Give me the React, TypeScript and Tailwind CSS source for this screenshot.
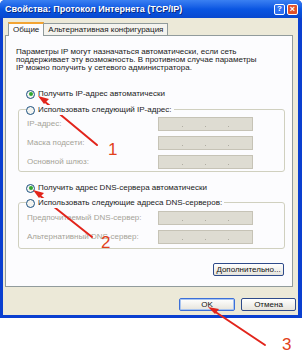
import React from 'react';

const font = { fontFamily: '"Liberation Sans", "DejaVu Sans", sans-serif' };

function Radio({ checked, label, disabled }: { checked?: boolean; label: string; disabled?: boolean }) {
  return (
    <div className="flex items-center gap-[3px] h-[10px]">
      <div className="w-[9px] h-[9px] rounded-full border border-[#1c5180] bg-[#f4f4f0] flex items-center justify-center">
        {checked && <div className="w-[4px] h-[4px] rounded-full bg-[#2fa830]" />}
      </div>
      <span className={disabled ? 'text-[#a09f96]' : 'text-[#1a1a1a]'}>{label}</span>
    </div>
  );
}

function IpField() {
  return (
    <div className="w-[95px] h-[14px] border border-[#c6c3b6] bg-[#dedcd2] flex items-center justify-around px-[12px]">
      <span className="w-[1px] h-[1px] bg-[#b0ada2] mt-[4px]" />
      <span className="w-[1px] h-[1px] bg-[#b0ada2] mt-[4px]" />
      <span className="w-[1px] h-[1px] bg-[#b0ada2] mt-[4px]" />
    </div>
  );
}

function FieldRow({ label }: { label: string }) {
  return (
    <div className="flex items-center justify-between h-[14px]">
      <span className="text-[#a5a398]">{label}</span>
      <IpField />
    </div>
  );
}

function XpButton({ children, className }: { children: React.ReactNode; className?: string }) {
  return (
    <div
      className={
        'h-[13px] rounded-[2px] border border-[#2e4a8a] bg-gradient-to-b from-[#ffffff] to-[#e6e4dc] flex items-center justify-center text-[#111] ' +
        (className ?? '')
      }
    >
      {children}
    </div>
  );
}

export default function App() {
  return (
    <div className="relative w-[304px] h-[360px] bg-white overflow-hidden text-[8px] leading-[8px]" style={font}>
      <div className="w-[302px] h-[318px] flex flex-col bg-[#0a3fd0] rounded-t-[5px] overflow-hidden">
        {/* title bar */}
        <div className="h-[18px] bg-gradient-to-b from-[#3a80f2] via-[#0a56e2] to-[#0848cf] flex items-center justify-between pl-[5px] pr-[4px]">
          <span className="text-white font-bold text-[9px] [text-shadow:1px_1px_0_#0a2a80]">
            Свойства: Протокол Интернета (TCP/IP)
          </span>
          <div className="flex gap-[2px]">
            <div className="w-[11px] h-[11px] rounded-[2px] border border-white bg-[#2d6ff0] text-white text-[8px] font-bold flex items-center justify-center">
              ?
            </div>
            <div className="w-[11px] h-[11px] rounded-[2px] border border-white bg-[#e0502a] text-white text-[9px] font-bold flex items-center justify-center">
              ×
            </div>
          </div>
        </div>

        {/* body */}
        <div className="flex-1 mx-[3px] mr-[4px] mb-[3px] bg-[#ece9d8] flex flex-col px-[2px] pt-[4px]">
          {/* tabs */}
          <div className="flex items-end h-[13px] pl-[3px]">
            <div className="h-[14px] px-[4px] bg-[#fcfcfe] border border-b-0 border-[#919b9c] border-t-[2px] border-t-[#f3a432] flex items-center text-[#1a1a1a] relative z-10 -mb-[1px]">
              Общие
            </div>
            <div className="h-[12px] px-[4px] bg-[#f4f3ee] border border-b-0 border-l-0 border-[#919b9c] flex items-center text-[#1a1a1a]">
              Альтернативная конфигурация
            </div>
          </div>

          {/* panel */}
          <div className="w-[288px] h-[252px] border border-[#919b9c] bg-[#fcfcfe] flex flex-col pl-[10px] pr-[8px] pt-[12px]">
            <p className="text-[#1a1a1a] leading-[8px]">
              Параметры IP могут назначаться автоматически, если сеть
              <br />
              поддерживает эту возможность. В противном случае параметры
              <br />
              IP можно получить у сетевого администратора.
            </p>

            <div className="mt-[17px] pl-[10px] flex flex-col">
              <Radio checked label="Получить IP-адрес автоматически" />
              <div className="mt-[6px] relative">
                <div className="absolute left-0 top-0 bg-[#fcfcfe] pr-[2px] z-10">
                  <Radio label="Использовать следующий IP-адрес:" />
                </div>
                <div className="-ml-[8px] mt-[4px] w-[267px] h-[63px] border border-[#d0d0bf] rounded-[3px] flex flex-col gap-[5px] pl-[8px] pr-[31px] pt-[7px]">
                  <FieldRow label="IP-адрес:" />
                  <FieldRow label="Маска подсети:" />
                  <FieldRow label="Основной шлюз:" />
                </div>
              </div>

              <div className="mt-[11px]">
                <Radio checked label="Получить адрес DNS-сервера автоматически" />
              </div>
              <div className="mt-[5px] relative">
                <div className="absolute left-0 top-0 bg-[#fcfcfe] pr-[2px] z-10">
                  <Radio label="Использовать следующие адреса DNS-серверов:" />
                </div>
                <div className="-ml-[8px] mt-[4px] w-[267px] h-[47px] border border-[#d0d0bf] rounded-[3px] flex flex-col gap-[5px] pl-[8px] pr-[31px] pt-[8px]">
                  <FieldRow label="Предпочитаемый DNS-сервер:" />
                  <FieldRow label="Альтернативный DNS-сервер:" />
                </div>
              </div>
            </div>

            <div className="flex justify-end mt-[14px]">
              <XpButton className="w-[71px]">Дополнительно...</XpButton>
            </div>
          </div>

          {/* bottom buttons */}
          <div className="flex justify-end gap-[6px] mt-[11px]">
            <XpButton className="w-[56px] border-[#3c6fd8] shadow-[inset_0_0_0_1px_#a8c4f0]">OK</XpButton>
            <XpButton className="w-[55px]">Отмена</XpButton>
          </div>
        </div>
      </div>

      {/* annotation arrows */}
      <svg className="absolute inset-0 pointer-events-none" width="304" height="360" viewBox="0 0 304 360">
        <g stroke="#e2241b" strokeWidth="2" fill="#e2241b" strokeLinecap="round">
          <line x1="97" y1="145" x2="44" y2="101" />
          <polygon points="38,96 49,99 44,104" stroke="none" />
          <line x1="92" y1="237" x2="39" y2="195" />
          <polygon points="33,190 44,193 39,198" stroke="none" />
          <line x1="265" y1="345" x2="214" y2="311" />
          <polygon points="208,307 219,309 215,314" stroke="none" />
        </g>
      </svg>
      <span className="absolute left-[108px] top-[141px] text-[#e2401a] text-[17px] leading-[17px]">1</span>
      <span className="absolute left-[101px] top-[234px] text-[#e2401a] text-[17px] leading-[17px]">2</span>
      <span className="absolute left-[282px] top-[336px] text-[#e2401a] text-[17px] leading-[17px]">3</span>
    </div>
  );
}
